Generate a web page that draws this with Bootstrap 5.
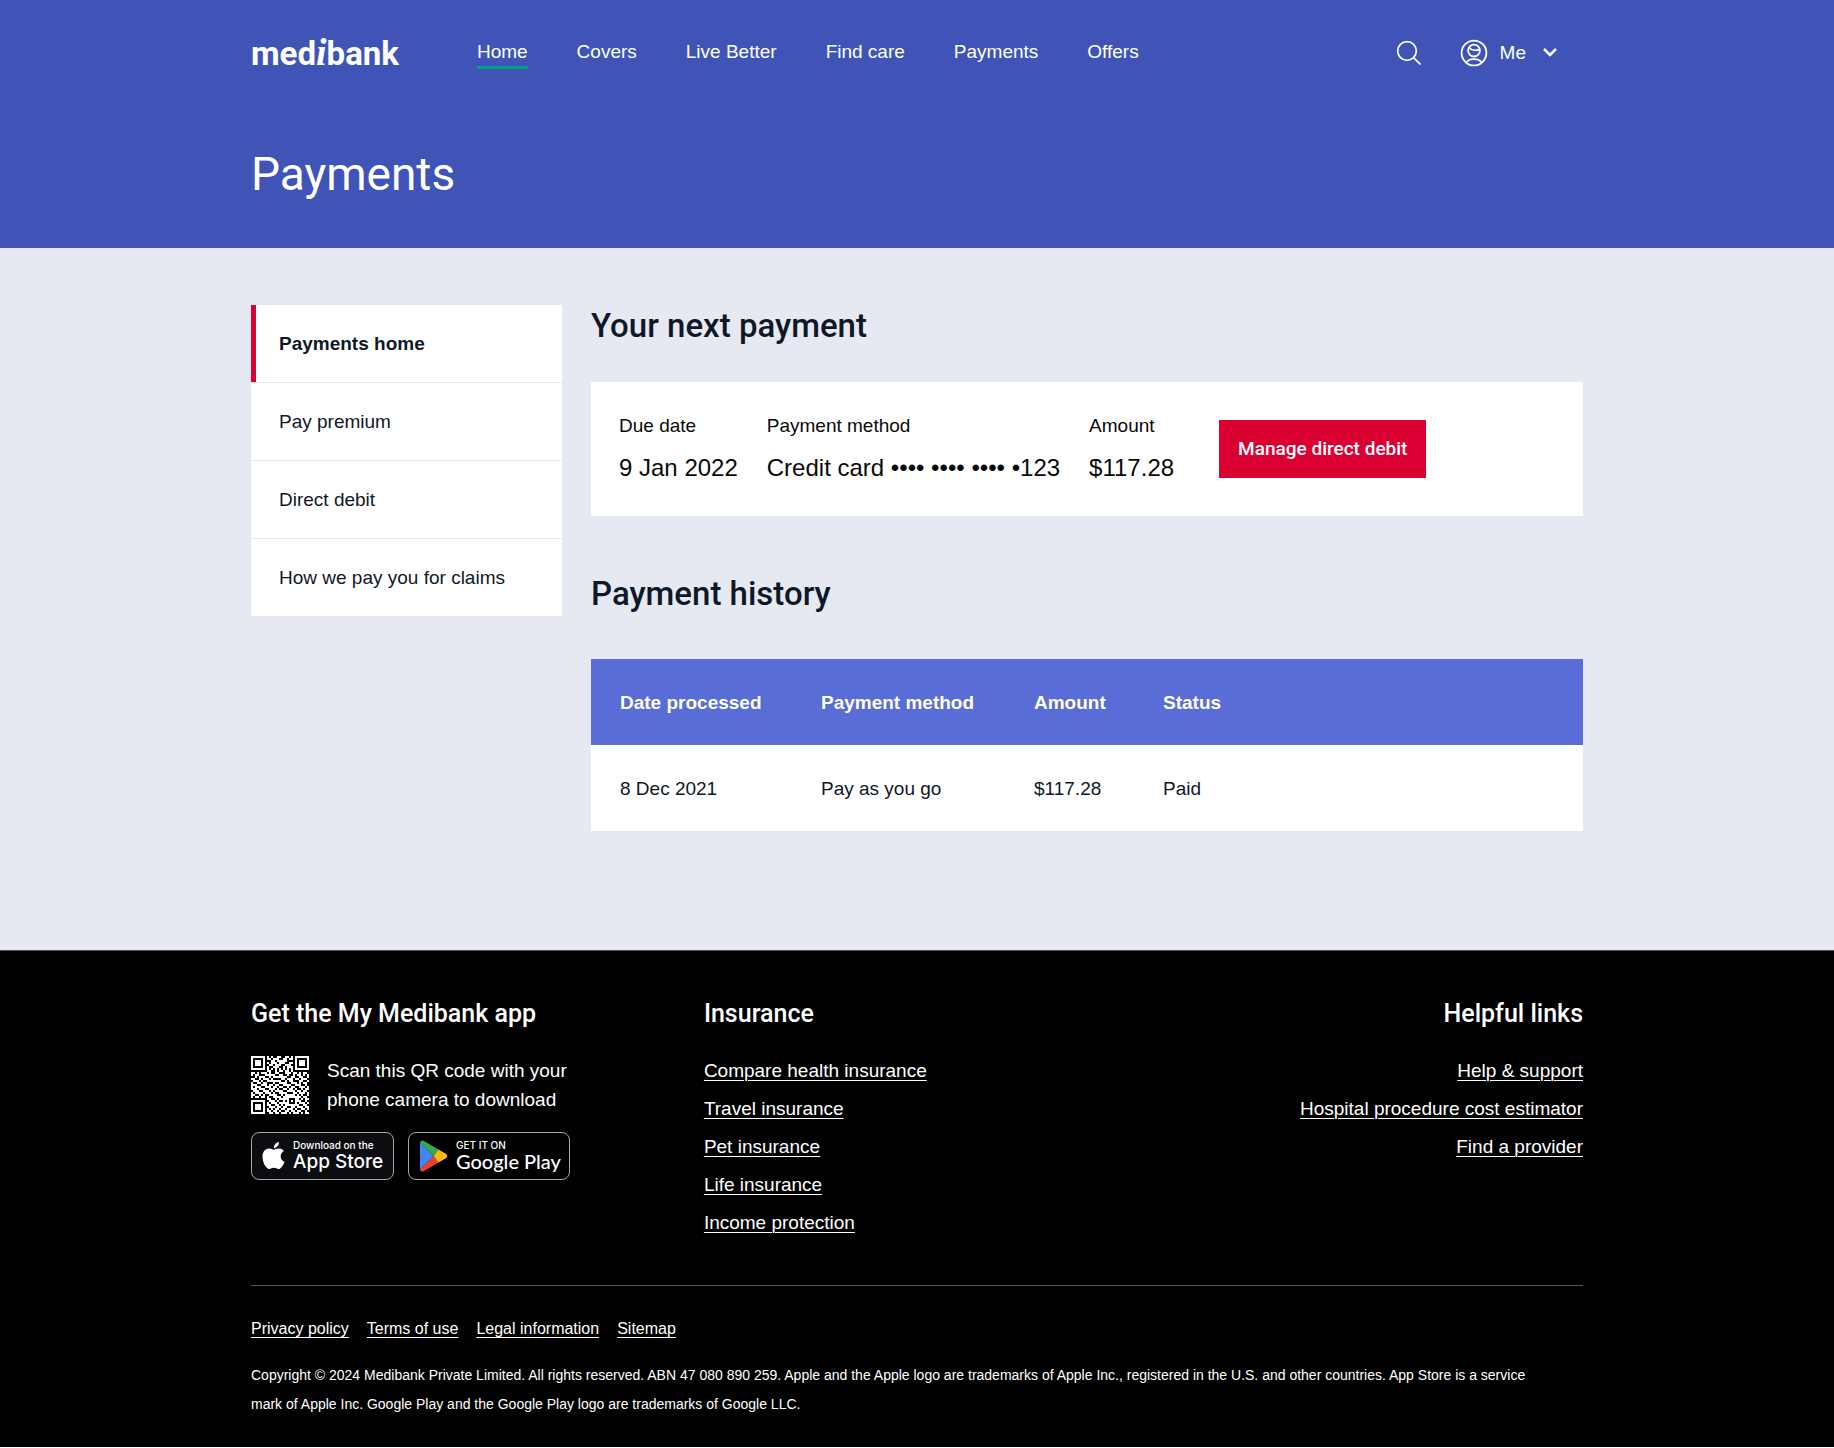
<!DOCTYPE html>
<html lang="en">
<head>
<meta charset="utf-8">
<meta name="viewport" content="width=device-width, initial-scale=1">
<title>Payments | Medibank</title>
<link rel="stylesheet" href="https://cdn.jsdelivr.net/npm/bootstrap@5.3.0/dist/css/bootstrap.min.css">
<style>
  :root { --ink: #0f1828; --brand: #4054b8; --brand-light: #5a6cd5; --accent: #db0032; --page: #e6e9f1; }
  body { font-family: "Liberation Sans", Arial, sans-serif; font-size: 19px; line-height: 29px; color: var(--ink); background: #fff; }
  a { color: inherit; text-decoration: none; }
  .wrap { max-width: 1332px; margin-inline: auto; }
  .din { font-family: Roboto, sans-serif; font-weight: 500; margin: 0; }
  .masthead { background: var(--brand); color: #fff; }
  .masthead .topbar { min-height: 105px; }
  .logo-word { font: 700 33px/40px Roboto, sans-serif; color: #fff; }
  .logo-i { font: italic 700 38px/40px "Liberation Serif", serif; }
  .main-nav { gap: 49px; margin-left: 78px; }
  .main-nav a { border-bottom: 3px solid transparent; }
  .main-nav a.active { border-color: #009f86; }
  .tools { gap: 38px; padding-right: 25px; }
  .tool-btn { background: none; border: 0; padding: 0; color: #fff; }
  .page-title { font-size: 46px; line-height: 56px; font-weight: 400; padding: 41px 0 46px; }
  .content-area { background: var(--page); padding: 57px 0 119px; }
  .columns { gap: 29px; }
  .side-nav { flex: 0 0 311px; }
  .side-nav a { display: block; background: #fff; padding: 24px 28px; border-left: 0; }
  .side-nav a + a { margin-top: 1px; }
  .side-nav a.active { font-weight: 700; border-left: 5px solid var(--accent); padding-left: 23px; }
  .section-title { font-size: 33px; line-height: 42px; }
  .next-pay { background: #fff; color: #0a0a0a; gap: 29px; padding: 29px 29px 29px 28px; margin: 35px 0 57px; min-height: 134px; }
  .next-pay dt { font-weight: 400; margin-bottom: 13px; }
  .next-pay dd { font-size: 24px; margin: 0; }
  .btn-manage { background: var(--accent); color: #fff; border: 0; border-radius: 0; font: 500 19px/24px Roboto, sans-serif; padding: 17px 19px; margin-left: 16px; }
  .btn-manage:hover { background: #b80029; color: #fff; }
  .history { margin: 44px 0 0; background: #fff; width: 100%; table-layout: fixed; }
  .history th, .history td { height: 86px; padding: 0; vertical-align: middle; }
  .history th:first-child, .history td:first-child { padding-left: 29px; }
  .history thead { background: var(--brand-light); color: #fff; }
  .c-date { width: 230px; } .c-method { width: 213px; } .c-amount { width: 129px; }
  .foot { background: #000; color: #fff; border-top: 1px solid #4a4e58; padding: 42px 0 28px; }
  .foot-title { font-size: 25px; line-height: 42px; margin-bottom: 21px; }
  .foot-main { min-height: 293px; border-bottom: 1px solid #565b66; }
  .foot-app { flex: 0 0 34%; }
  .foot a.under { text-decoration: underline; text-decoration-thickness: 1px; text-underline-offset: 3px; }
  .foot-list { display: grid; gap: 9px; margin: 0; }
  .scan-row { gap: 18px; }
  .legal-links { font-size: 16px; gap: 18px; padding: 28px 0 18px; }
  .legal-text { font-size: 14px; margin: 0; }
  .stores { gap: 14px; margin-top: 18px; }
  .badge-store { height: 48px; border: 1px solid #a6a6a6; border-radius: 8px; background: #0c0d10; padding-left: 10px; color: #fff; }
  .store-apple { width: 143px; }
  .store-google { width: 162px; background: #000; }
  .tiny { display: block; font: 500 10px/11px Inter, sans-serif; }
  .big { display: block; font: 500 19px/21px Inter, sans-serif; white-space: nowrap; }
  .store-google .big { font-family: Lato, sans-serif; font-size: 20px; }
  @media (max-width: 1100px) {
    .wrap { padding-inline: 20px; }
    .topbar, .columns, .foot-main, .next-pay { flex-wrap: wrap; }
    .main-nav { margin-left: 0; flex-wrap: wrap; gap: 20px; }
    .side-nav { flex-basis: 100%; }
  }
</style>
</head>
<body>
<header class="masthead">
  <div class="wrap">
    <div class="topbar d-flex align-items-center">
      <a href="#" class="logo-word" aria-label="medibank">med<span class="logo-i">i</span>bank</a>
      <nav class="main-nav d-flex" aria-label="Main">
        <a href="#" class="active" aria-current="page">Home</a>
        <a href="#">Covers</a>
        <a href="#">Live Better</a>
        <a href="#">Find care</a>
        <a href="#">Payments</a>
        <a href="#">Offers</a>
      </nav>
      <div class="tools d-flex align-items-center ms-auto">
        <button type="button" class="tool-btn d-flex" aria-label="Search">
          <svg width="26" height="26" viewBox="0 0 26 26" fill="none" stroke="currentColor" stroke-width="1.7"><circle cx="11" cy="11" r="9.3"/><path d="M17.6 17.6 24.5 24.5"/></svg>
        </button>
        <button type="button" class="tool-btn d-flex align-items-center">
          <svg width="28" height="28" viewBox="0 0 28 28" fill="none" stroke="currentColor" stroke-width="1.8"><circle cx="14" cy="14" r="12.4"/><circle cx="14" cy="11.600" r="5.900"/><path d="M9.300 8.400c1.400 2.500 5.400 3.600 10 2.200M6.400 23.600c1.200-2.400 4.100-3.500 7.600-3.500s6.400 1.100 7.600 3.500"/></svg>
          <span class="ms-2 me-3 ps-1">Me</span>
          <svg width="16" height="11" viewBox="0 0 16 11" fill="none" stroke="currentColor" stroke-width="2.500"><path d="m2 2 6 6 6-6"/></svg>
        </button>
      </div>
    </div>
    <h1 class="din page-title">Payments</h1>
  </div>
</header>

<main class="content-area">
  <div class="wrap columns d-flex align-items-start">
    <nav class="side-nav" aria-label="Payments">
      <a href="#" class="active" aria-current="page">Payments home</a>
      <a href="#">Pay premium</a>
      <a href="#">Direct debit</a>
      <a href="#">How we pay you for claims</a>
    </nav>
    <div class="flex-grow-1">
      <h2 class="din section-title">Your next payment</h2>
      <dl class="next-pay d-flex">
        <div><dt>Due date</dt><dd>9 Jan 2022</dd></div>
        <div><dt>Payment method</dt><dd>Credit card •••• •••• •••• •123</dd></div>
        <div><dt>Amount</dt><dd>$117.28</dd></div>
        <div class="align-self-center"><button type="button" class="btn btn-manage">Manage direct debit</button></div>
      </dl>
      <h2 class="din section-title">Payment history</h2>
      <table class="history">
        <colgroup><col class="c-date"><col class="c-method"><col class="c-amount"><col></colgroup>
        <thead><tr><th scope="col">Date processed</th><th scope="col">Payment method</th><th scope="col">Amount</th><th scope="col">Status</th></tr></thead>
        <tbody><tr><td>8 Dec 2021</td><td>Pay as you go</td><td>$117.28</td><td>Paid</td></tr></tbody>
      </table>
    </div>
  </div>
</main>

<footer class="foot">
  <div class="wrap">
    <div class="foot-main d-flex">
      <section class="foot-app">
        <h3 class="din foot-title">Get the My Medibank app</h3>
        <div class="scan-row d-flex align-items-center">
          <svg id="qr" width="58" height="58" viewBox="0 0 29 29" fill="#fff" role="img" aria-label="QR code" shape-rendering="crispEdges"></svg>
          <div>Scan this QR code with your<br>phone camera to download</div>
        </div>
        <div class="stores d-flex">
          <a href="#" class="badge-store store-apple d-flex align-items-center">
            <svg width="23" height="28" viewBox="0 0 23 28" fill="#fff"><path d="M18.700 14.400c0-2.500 1.300-4.100 3.200-5.300-1.400-2-3.500-2.600-5.200-2.600-2.100 0-3.700 1.200-4.900 1.200S9 6.500 7.100 6.500C3.700 6.500.5 9.400.5 14.800.5 20.200 4 27 7.300 27c1.800 0 2.500-1.200 4.600-1.200 2.100 0 2.700 1.200 4.500 1.200 2.500 0 4.800-3.400 6.100-7.300-2.300-.9-3.800-2.700-3.800-5.300zM12 6.200c-.2-2.900 2-5.700 4.900-6.100.3 3-2.100 5.900-4.900 6.100z"/></svg>
            <span class="ms-2"><span class="tiny">Download on the</span><span class="big">App Store</span></span>
          </a>
          <a href="#" class="badge-store store-google d-flex align-items-center">
            <svg width="29" height="32" viewBox="0 0 29 32"><path fill="#4285f4" d="M1 2.500v27L14.600 16z"/><path fill="#34a853" d="M1 2.500C1.500.4 3.200-.1 5 1l14.500 8.500L14.600 16z"/><path fill="#ea4335" d="M1 29.500c.5 2.100 2.200 2.600 4 1.500l14.500-8.500L14.600 16z"/><path fill="#fbbc04" d="m19.500 9.500 7.300 4.200c1.900 1.100 1.900 3.500 0 4.600l-7.300 4.200-4.900-6.500z"/></svg>
            <span class="ms-2"><span class="tiny">GET IT ON</span><span class="big">Google Play</span></span>
          </a>
        </div>
      </section>
      <section>
        <h3 class="din foot-title">Insurance</h3>
        <ul class="foot-list list-unstyled">
          <li><a class="under" href="#">Compare health insurance</a></li>
          <li><a class="under" href="#">Travel insurance</a></li>
          <li><a class="under" href="#">Pet insurance</a></li>
          <li><a class="under" href="#">Life insurance</a></li>
          <li><a class="under" href="#">Income protection</a></li>
        </ul>
      </section>
      <section class="ms-auto text-end">
        <h3 class="din foot-title">Helpful links</h3>
        <ul class="foot-list list-unstyled">
          <li><a class="under" href="#">Help &amp; support</a></li>
          <li><a class="under" href="#">Hospital procedure cost estimator</a></li>
          <li><a class="under" href="#">Find a provider</a></li>
        </ul>
      </section>
    </div>
    <nav class="legal-links d-flex flex-wrap" aria-label="Legal">
      <a class="under" href="#">Privacy policy</a>
      <a class="under" href="#">Terms of use</a>
      <a class="under" href="#">Legal information</a>
      <a class="under" href="#">Sitemap</a>
    </nav>
    <p class="legal-text">Copyright © 2024 Medibank Private Limited. All rights reserved. ABN 47 080 890 259. Apple and the Apple logo are trademarks of Apple Inc., registered in the U.S. and other countries. App Store is a service<br>mark of Apple Inc. Google Play and the Google Play logo are trademarks of Google LLC.</p>
  </div>
</footer>
<script src="https://cdn.jsdelivr.net/npm/bootstrap@5.3.0/dist/js/bootstrap.bundle.min.js"></script>
<script>
  // QR modules, one string per row; "1" is a light module.
  const modules = [
    "11111110101001100110101111111",
    "10000010110111001101101000001",
    "10111010001101111100001011101",
    "10111010101110111001101011101",
    "10111010011011100111001011101",
    "10000010100111001011101000001",
    "11111110101010101010101111111",
    "00000000110010110110100000000",
    "11010111010011000111011010110",
    "10110001111100110010010110101",
    "00101110010111111100110011001",
    "11001011101000011011101101110",
    "01110100111111100101100011001",
    "10011011000100111100111010110",
    "11100111011011001111001110010",
    "10111001110110110010110011101",
    "11101110011101001101101001011",
    "01110011101011110011110110110",
    "10111101110100111100011011101",
    "11001010011110010111110101001",
    "10110110100111101111111110110",
    "00000000110010111110001101011",
    "11111110011101001010101110010",
    "10000010101110111110001011101",
    "10111010110011010111111100110",
    "10111010011101101100110111011",
    "10111010101011011011101001101",
    "10000010110110100110110110010",
    "11111110011011011101011101011"
  ];
  document.getElementById("qr").innerHTML = modules.map((row, y) =>
    [...row].map((m, x) => m === "1" ? `<rect x="${x}" y="${y}" width="1" height="1"/>` : "").join("")).join("");
</script>
</body>
</html>
